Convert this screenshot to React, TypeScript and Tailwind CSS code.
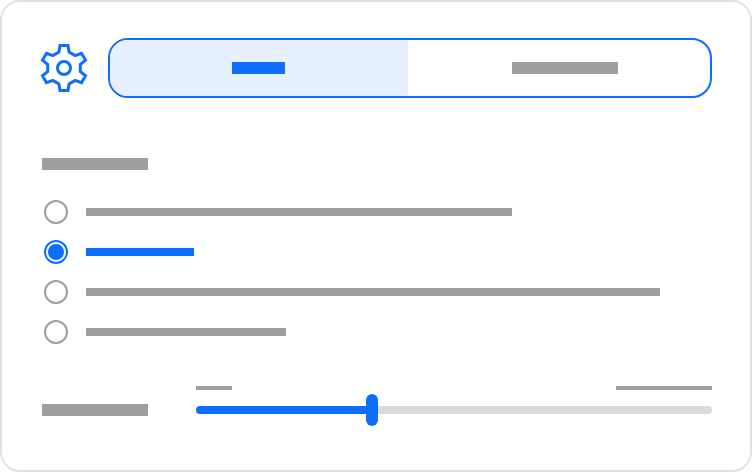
import clsx from 'clsx';

interface Option {
  id: string;
  width: string;
  selected?: boolean;
}

const options: Option[] = [
  { id: 'first', width: 'w-[426px]' },
  { id: 'second', width: 'w-[108px]', selected: true },
  { id: 'third', width: 'w-[574px]' },
  { id: 'fourth', width: 'w-[200px]' },
];

function GearIcon() {
  return (
    <svg
      className="size-12 shrink-0"
      viewBox="-24 -24 48 48"
      fill="none"
      stroke="#0d6efd"
      strokeWidth={3}
    >
      <path d="M-5.1-15.9-4-22.5H4L5.1-15.9 11.2-12.4 17.5-14.7 21.5-7.8 16.3-3.5V3.5L21.5 7.8 17.5 14.7 11.2 12.4 5.1 15.9 4 22.5H-4L-5.1 15.9-11.2 12.4-17.5 14.7-21.5 7.8-16.3 3.5V-3.5L-21.5-7.8-17.5-14.7-11.2-12.4Z" />
      <circle r={6.5} />
    </svg>
  );
}

// Segmented control, left half active
function Tabs() {
  return (
    <div className="flex h-15 w-[604px] overflow-hidden rounded-[20px] border-2 border-[#0d6efd]">
      <div className="flex w-[298px] items-center bg-[#e6f0ff] pl-[122px]">
        <div className="h-3 w-[53px] bg-[#0d6efd]" />
      </div>
      <div className="flex flex-1 items-center pl-[104px]">
        <div className="h-3 w-[106px] bg-[#9e9e9e]" />
      </div>
    </div>
  );
}

function RadioRow({ width, selected }: Option) {
  return (
    <div className="flex items-center gap-[18px]">
      <div
        className={clsx(
          'flex size-6 items-center justify-center rounded-full border-2',
          selected ? 'border-[#0d6efd]' : 'border-[#9e9e9e]',
        )}
      >
        {selected && <div className="size-4 rounded-full bg-[#0d6efd]" />}
      </div>
      <div className={clsx('h-2', width, selected ? 'bg-[#0d6efd]' : 'bg-[#9e9e9e]')} />
    </div>
  );
}

function Slider() {
  return (
    <div className="w-[516px]">
      <div className="flex justify-between">
        <div className="h-1 w-9 bg-[#9e9e9e]" />
        <div className="h-1 w-24 bg-[#9e9e9e]" />
      </div>
      <div className="mt-1 flex items-center">
        <div className="h-2 w-[170px] rounded-l-full bg-[#0d6efd]" />
        <div className="h-8 w-3 rounded-full bg-[#0d6efd]" />
        <div className="h-2 flex-1 rounded-r-full bg-[#d9d9d9]" />
      </div>
    </div>
  );
}

export default function App() {
  return (
    <div className="h-[472px] w-[752px] rounded-[20px] border-2 border-[#e0e0e0] bg-white px-[38px] pt-9">
      <div className="flex items-center gap-5">
        <GearIcon />
        <Tabs />
      </div>

      <div className="mt-15 ml-0.5 h-3 w-[106px] bg-[#9e9e9e]" />

      <div className="mt-[30px] ml-1 flex flex-col gap-4">
        {options.map((option) => (
          <RadioRow key={option.id} {...option} />
        ))}
      </div>

      <div className="mt-[42px] ml-0.5 flex gap-12">
        <div className="mt-[18px] h-3 w-[106px] bg-[#9e9e9e]" />
        <Slider />
      </div>
    </div>
  );
}
